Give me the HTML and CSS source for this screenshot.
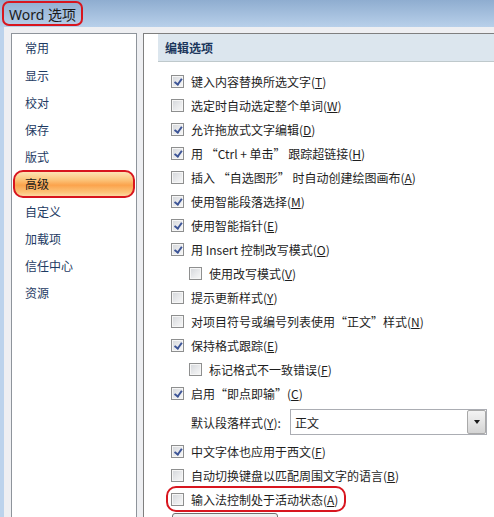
FILE: index.html
```html
<!DOCTYPE html>
<html lang="zh-CN">
<head>
<meta charset="utf-8">
<title>Word 选项</title>
<link rel="stylesheet" href="styles.css">
</head>
<body>
<div class="window">
  <div class="titlebar"><span class="title">Word 选项</span></div>
  <div class="client">
    <div class="nav">
      <div class="nav-item">常用</div>
      <div class="nav-item">显示</div>
      <div class="nav-item">校对</div>
      <div class="nav-item">保存</div>
      <div class="nav-item">版式</div>
      <div class="nav-item sel">高级</div>
      <div class="nav-item">自定义</div>
      <div class="nav-item">加载项</div>
      <div class="nav-item">信任中心</div>
      <div class="nav-item">资源</div>
    </div>
    <div class="main">
      <div class="section-head">编辑选项</div>
      <div class="options">
        <div class="row"><span class="cb on"></span><span>键入内容替换所选文字(<u>T</u>)</span></div>
        <div class="row"><span class="cb"></span><span>选定时自动选定整个单词(<u>W</u>)</span></div>
        <div class="row"><span class="cb on"></span><span>允许拖放式文字编辑(<u>D</u>)</span></div>
        <div class="row"><span class="cb on"></span><span>用 “Ctrl + 单击” 跟踪超链接(<u>H</u>)</span></div>
        <div class="row"><span class="cb"></span><span>插入 “自选图形” 时自动创建绘图画布(<u>A</u>)</span></div>
        <div class="row"><span class="cb on"></span><span>使用智能段落选择(<u>M</u>)</span></div>
        <div class="row"><span class="cb on"></span><span>使用智能指针(<u>E</u>)</span></div>
        <div class="row"><span class="cb on"></span><span>用 Insert 控制改写模式(<u>O</u>)</span></div>
        <div class="row sub"><span class="cb"></span><span>使用改写模式(<u>V</u>)</span></div>
        <div class="row"><span class="cb"></span><span>提示更新样式(<u>Y</u>)</span></div>
        <div class="row"><span class="cb"></span><span>对项目符号或编号列表使用“正文”样式(<u>N</u>)</span></div>
        <div class="row"><span class="cb on"></span><span>保持格式跟踪(<u>E</u>)</span></div>
        <div class="row sub"><span class="cb"></span><span>标记格式不一致错误(<u>F</u>)</span></div>
        <div class="row"><span class="cb on"></span><span>启用“即点即输”(<u>C</u>)</span></div>
        <div class="combo-row">
          <span class="combo-label">默认段落样式(<u>Y</u>):</span>
          <div class="combo"><span>正文</span><span class="combo-btn"><span class="tri"></span></span></div>
        </div>
        <div class="row"><span class="cb on"></span><span>中文字体也应用于西文(<u>F</u>)</span></div>
        <div class="row"><span class="cb"></span><span>自动切换键盘以匹配周围文字的语言(<u>B</u>)</span></div>
        <div class="hl"><div class="row inner"><span class="cb"></span><span>输入法控制处于活动状态(<u>A</u>)</span></div></div>
        <div class="btn"></div>
      </div>
    </div>
  </div>
</div>
</body>
</html>
```
FILE: styles.css
```css
html, body {
  margin: 0;
  padding: 0;
}
body {
  width: 494px;
  height: 517px;
  overflow: hidden;
  font-family: "Noto Sans CJK SC", "Noto Sans", sans-serif;
  font-size: 12px;
  color: #1e1e1e;
  background: #eeeff2;
}
.window {
  width: 494px;
  height: 517px;
  display: flex;
  flex-direction: column;
}
.titlebar {
  height: 27px;
  flex: none;
  background: linear-gradient(#8fadd0, #b8d0ea);
  display: flex;
  align-items: center;
  padding-left: 2px;
  box-sizing: border-box;
}
.title {
  height: 25px;
  box-sizing: border-box;
  border: 2px solid #d8161f;
  border-radius: 7px;
  padding: 0 5px;
  display: flex;
  align-items: center;
  font-family: "Noto Sans", "Noto Sans CJK SC", sans-serif;
  font-size: 14px;
  color: #1b1b1b;
}
.client {
  flex: 1;
  display: flex;
  min-height: 0;
  background: #eeeff2;
  border-left: 4px solid #bcd3ec;
  padding-top: 6px;
  overflow: hidden;
}
.nav {
  flex: none;
  margin-left: 7px;
  width: 126px;
  box-sizing: border-box;
  border: 1px solid #8e949b;
  border-bottom: none;
  background: #fff;
  padding-top: 0.4px;
}
.nav-item {
  height: 27.2px;
  box-sizing: border-box;
  display: flex;
  align-items: center;
  padding-left: 13px;
  color: #1e3b63;
  font-size: 12px;
}
.nav-item.sel {
  margin: 0 1px;
  border: 2px solid #d8161f;
  border-radius: 10px;
  padding-left: 10px;
  color: #1a1a1a;
  background: linear-gradient(to bottom, #fde4b4 0%, #fcc880 30%, #fba34c 55%, #fcc47a 85%, #fdd9a0 100%);
}
.main {
  flex: 1;
  margin-left: 6px;
  background: #fff;
  border-left: 1px solid #7f7f7f;
  border-top: 1px solid #7f7f7f;
  min-width: 0;
}
.section-head {
  margin-left: 14px;
  height: 28px;
  box-sizing: border-box;
  background: #dce6ee;
  border-bottom: 1px solid #bfc9cc;
  padding-left: 7px;
  display: flex;
  align-items: center;
  font-weight: bold;
  color: #1b365c;
}
.options {
  padding-left: 27px;
  padding-top: 7px;
}
.row {
  height: 24px;
  display: flex;
  align-items: center;
  gap: 7px;
  white-space: nowrap;
}
.row.sub {
  margin-left: 18px;
}
.cb {
  flex: none;
  width: 13px;
  height: 13px;
  box-sizing: border-box;
  border: 1px solid #8e8f8f;
  background: linear-gradient(135deg, #d3d6da 0%, #e9eaec 55%, #f8f8f8 100%);
  box-shadow: inset 0 0 0 1px #f6f6f6;
  position: relative;
}
.cb.on::after {
  content: "";
  position: absolute;
  left: 4px;
  top: 1.5px;
  width: 2.5px;
  height: 5.5px;
  border-right: 2px solid #3d5597;
  border-bottom: 2px solid #3d5597;
  transform: rotate(36deg);
}
.combo-row {
  height: 34px;
  display: flex;
  align-items: center;
  padding-left: 20px;
  white-space: nowrap;
}
.combo-label {
  width: 99px;
  flex: none;
}
.combo {
  width: 197px;
  height: 26px;
  box-sizing: border-box;
  border: 1px solid #abadb3;
  background: #fff;
  display: flex;
  align-items: center;
  justify-content: space-between;
  padding-left: 4px;
}
.combo-btn {
  width: 19px;
  height: 24px;
  box-sizing: border-box;
  border: 1px solid #a9a9a9;
  border-radius: 2px;
  background: linear-gradient(#f4f4f4, #e4e4e4 50%, #d4d4d4);
  display: flex;
  align-items: center;
  justify-content: center;
}
.tri {
  width: 0;
  height: 0;
  border-left: 3.5px solid transparent;
  border-right: 3.5px solid transparent;
  border-top: 4px solid #1a1a1a;
}
.hl {
  width: fit-content;
  margin-left: -5px;
  margin-top: -1px;
  border: 2px solid #d8161f;
  border-radius: 10px;
  padding: 0 6px 0 3px;
}
.hl .row.inner {
  height: 22px;
}
.btn {
  margin-left: 1px;
  margin-top: 1px;
  width: 106px;
  height: 22px;
  box-sizing: border-box;
  border: 1px solid #707070;
  border-radius: 3px;
  background: linear-gradient(#f2f2f2, #dddddd);
}
```
